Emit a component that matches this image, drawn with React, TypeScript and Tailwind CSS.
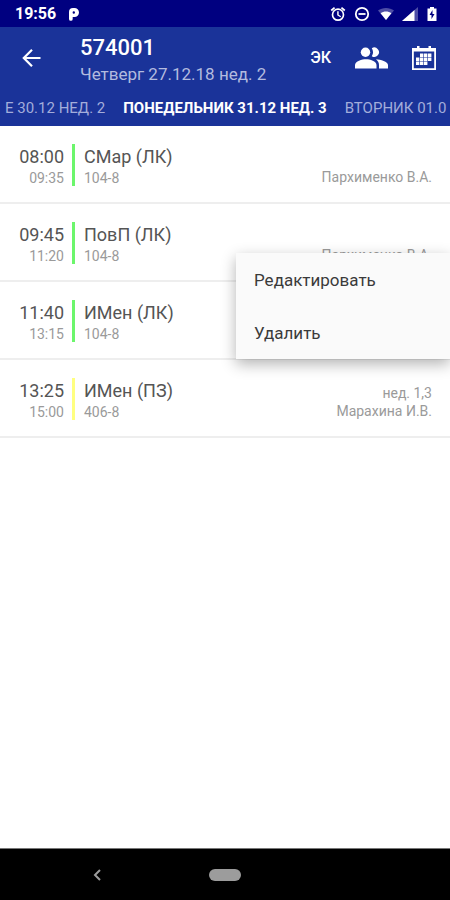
import type { ReactNode } from 'react'

type Lesson = {
    start: string
    end: string
    title: string
    room: string
    teacher: string
    weeks?: string
    practice?: boolean
}

const lessons: Lesson[] = [
    { start: '08:00', end: '09:35', title: 'СМар (ЛК)', room: '104-8', teacher: 'Пархименко В.А.' },
    { start: '09:45', end: '11:20', title: 'ПовП (ЛК)', room: '104-8', teacher: 'Пархименко В.А.' },
    { start: '11:40', end: '13:15', title: 'ИМен (ЛК)', room: '104-8', teacher: '' },
    { start: '13:25', end: '15:00', title: 'ИМен (ПЗ)', room: '406-8', teacher: 'Марахина И.В.', weeks: 'нед. 1,3', practice: true },
]

function StatusBar() {
    return (
        <div className="flex h-[27px] items-center justify-between bg-[#000080] pl-[15px] pr-3 pt-px text-white">
            <div className="flex items-center gap-3">
                <span className="text-base font-bold leading-5">19:56</span>
                <svg viewBox="0 0 12 14" className="h-[14px] w-3" fill="currentColor">
                    <path fillRule="evenodd" d="M1 5a4 4 0 0 1 4-4h1.500a4.500 4.500 0 0 1 0 9H4.700v2a1.850 1.850 0 0 1-3.700 0zM5.800 4.300a1.200 1.200 0 1 0 0 2.400 1.200 1.200 0 0 0 0-2.400z" />
                </svg>
            </div>
            <div className="flex items-center gap-2">
                <svg viewBox="0 0 24 24" className="size-4" fill="currentColor">
                    <path d="M23 5.700l-5-4.300-1.700 2 5 4.300zM7.700 3.400L6 1.400 1 5.700l1.700 2zM13 8h-2.200v6l4.700 3 1.100-1.800-3.600-2.200z" />
                    <path fillRule="evenodd" d="M12 3.500a9.500 9.500 0 1 0 0 19 9.500 9.500 0 0 0 0-19zm0 16.500a7 7 0 1 1 0-14 7 7 0 0 1 0 14z" />
                </svg>
                <svg viewBox="0 0 16 16" className="size-4" fill="none" stroke="currentColor" strokeWidth="1.8">
                    <circle cx="8" cy="8" r="6.2" />
                    <path d="M4.500 8h7" />
                </svg>
                <svg viewBox="0 0 16 14" className="h-[14px] w-4" fill="currentColor">
                    <path d="M8 13L0 3.400C2.200 1.900 5 1 8 1s5.800.9 8 2.400z" opacity=".3" />
                    <path d="M8 13L2.600 6.200C4.200 5 6 4.400 8 4.400s3.800.6 5.400 1.800z" />
                </svg>
                <svg viewBox="0 0 16 14" className="h-[14px] w-4" fill="currentColor">
                    <path d="M0 14L16 0v14z" opacity=".3" />
                    <path d="M0 14L12.500 3V14z" />
                </svg>
                <svg viewBox="0 0 12 16" className="h-4 w-3" fill="currentColor">
                    <path fillRule="evenodd" d="M4 1h4v1.500h2.500V15h-9V2.500H4zM6.500 4L3.500 9h2v4l3-5h-2z" />
                </svg>
            </div>
        </div>
    )
}

function IconButton({ label, children }: { label: string; children: ReactNode }) {
    return (
        <button type="button" aria-label={label} className="flex items-center justify-center">
            {children}
        </button>
    )
}

function Toolbar() {
    return (
        <div className="flex h-[61px] items-center pl-5 pr-[13px] text-white">
            <IconButton label="Назад">
                <svg viewBox="0 0 24 24" className="size-6" fill="none" stroke="currentColor" strokeWidth="2.2">
                    <path d="M20.500 12H4M12 3.800L3.800 12l8.200 8.200" />
                </svg>
            </IconButton>
            <div className="ml-9 flex-1 pt-1">
                <h1 className="text-[22px] font-medium leading-7">574001</h1>
                <p className="text-[17px] leading-6 text-[#b3bbdf]">Четверг 27.12.18 нед. 2</p>
            </div>
            <div className="flex items-center gap-[23px]">
                <button type="button" className="text-base font-medium">ЭК</button>
                <IconButton label="Группа">
                    <svg viewBox="0 0 34 22" className="h-[22px] w-[34px]" fill="currentColor">
                        <circle cx="11.500" cy="5.200" r="4.700" />
                        <path d="M17.800 9.200a4.700 4.700 0 1 0 0-8 7.500 7.500 0 0 1 0 8z" />
                        <path d="M1 21.500V18c0-4 7-5.800 11-5.800s10.500 1.800 10.500 5.800v3.500z" />
                        <path d="M22 12.200c4.500.4 12 2.300 12 5.800v3.500h-9V18c0-2.400-1.200-4.300-3-5.800z" />
                    </svg>
                </IconButton>
                <IconButton label="Календарь">
                    <svg viewBox="0 0 26 26" className="size-[26px]" fill="currentColor">
                        <path fillRule="evenodd" d="M1 3h24v22H1zm1.800 3.500v16.700h20.400V6.500z" />
                        <path d="M6 1h2.500v4.500H6zM17.500 1H20v4.500h-2.500z" />
                        <path d="M9 8.500h3.400v3.400H9zM13 8.500h3.400v3.400H13zM17 8.500h3.400v3.400H17zM5 12.500h3.400v3.400H5zM9 12.500h3.400v3.400H9zM13 12.500h3.400v3.400H13zM17 12.500h3.400v3.400H17zM5 16.500h3.400v3.400H5zM9 16.500h3.400v3.400H9zM13 16.500h3.400v3.400H13z" />
                    </svg>
                </IconButton>
            </div>
        </div>
    )
}

function DayTabs() {
    return (
        <nav className="grid h-[38px] grid-cols-[1fr_auto_1fr] items-center gap-[18px] overflow-hidden whitespace-nowrap pt-[2px] text-[15px] text-[#a3addb]">
            <a href="#" className="text-right">Е 30.12 НЕД. 2</a>
            <a href="#" aria-current="page" className="font-bold text-white">ПОНЕДЕЛЬНИК 31.12 НЕД. 3</a>
            <a href="#">ВТОРНИК 01.0</a>
        </nav>
    )
}

function LessonRow({ lesson }: { lesson: Lesson }) {
    return (
        <li className="flex h-[78px] items-start border-b-2 border-[#eeeeee] px-[18px] pt-[18px]">
            <div className="w-[46px] text-right">
                <div className="text-lg leading-[26px] text-[#555555]">{lesson.start}</div>
                <div className="text-sm leading-4 text-[#9a9a9a]">{lesson.end}</div>
            </div>
            <div className={lesson.practice ? 'ml-2 h-[42px] w-[3px] bg-[#ffff80]' : 'ml-2 h-[42px] w-[3px] bg-[#6cf66c]'}></div>
            <div className="ml-[9px] flex-1">
                <div className="text-lg leading-[26px] text-[#555555]">{lesson.title}</div>
                <div className="text-sm leading-4 text-[#9a9a9a]">{lesson.room}</div>
            </div>
            <div className="flex h-[42px] flex-col justify-end text-right text-sm leading-[18px] text-[#9a9a9a]">
                <div>{lesson.weeks}</div>
                <div>{lesson.teacher}</div>
            </div>
        </li>
    )
}

function ContextMenu() {
    return (
        <div role="menu" className="absolute right-0 top-[127px] flex w-[214px] flex-col bg-[#fafafa] text-[17px] text-[#3a3a3a] shadow-[0_5px_14px_rgba(0,0,0,0.3)]">
            <button type="button" role="menuitem" className="h-[53px] px-[18px] pt-[2px] text-left">Редактировать</button>
            <button type="button" role="menuitem" className="h-[53px] px-[18px] pt-[2px] text-left">Удалить</button>
        </div>
    )
}

function NavigationBar() {
    return (
        <div className="grid h-[52px] grid-cols-[1fr_32px_1fr] items-center border-t border-[#777777] bg-black text-[#9c9c9c]">
            <button type="button" aria-label="Назад" className="justify-self-center pr-4">
                <svg viewBox="0 0 8 12" className="h-3 w-2" fill="none" stroke="currentColor" strokeWidth="2">
                    <path d="M7 1L2 6l5 5" />
                </svg>
            </button>
            <button type="button" aria-label="Домой" className="h-3 rounded-full bg-[#9c9c9c]"></button>
        </div>
    )
}

export default function App() {
    return (
        <div className="flex min-h-screen flex-col bg-white font-[Roboto,'Noto_Sans',sans-serif]">
            <header className="bg-[#1a3399]">
                <StatusBar />
                <Toolbar />
                <DayTabs />
            </header>
            <main className="relative flex-1">
                <ul>
                    {lessons.map((lesson) => (
                        <LessonRow key={lesson.start} lesson={lesson} />
                    ))}
                </ul>
                <ContextMenu />
            </main>
            <NavigationBar />
        </div>
    )
}
